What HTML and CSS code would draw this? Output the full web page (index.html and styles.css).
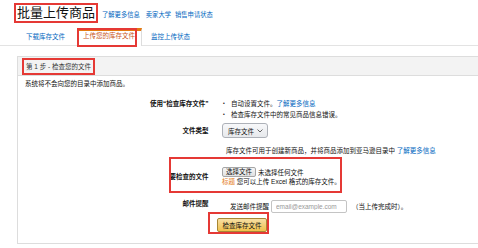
FILE: index.html
```html
<!DOCTYPE html>
<html lang="zh-CN">
<head>
  <meta charset="UTF-8" />
  <title>批量上传商品</title>
  <link rel="stylesheet" href="styles.css">
</head>
<body>
  <div class="top">
    <h1 class="mark">批量上传商品</h1>
    <nav class="top-links">
      <a href="#">了解更多信息</a>
      <a href="#">卖家大学</a>
      <a href="#">销售申请状态</a>
    </nav>
  </div>

  <ul class="tabs">
    <li class="tab">下载库存文件</li>
    <li class="tab active">上传您的库存文件</li>
    <li class="tab">监控上传状态</li>
  </ul>

  <section class="panel">
    <div class="panel-head">
      <span class="mark step">第 1 步 - 检查您的文件</span>
    </div>
    <div class="panel-body">
      <p class="intro">系统将不会向您的目录中添加商品。</p>

      <div class="row">
        <div class="label">使用“检查库存文件”</div>
        <ul class="value bullets">
          <li>自动设置文件。 <a href="#">了解更多信息</a></li>
          <li>检查库存文件中的常见商品信息错误。</li>
        </ul>
      </div>

      <div class="row row-type">
        <div class="label">文件类型</div>
        <div class="value">
          <span class="select">库存文件
            <svg width="6" height="4" viewBox="0 0 6 4"><polyline points="0.5,0.5 3,3 5.5,0.5" fill="none" stroke="#555" stroke-width="0.9"/></svg>
          </span>
        </div>
      </div>

      <div class="row row-note">
        <div class="label"></div>
        <div class="value note">库存文件可用于创建新商品，并将商品添加到亚马逊目录中 <a href="#">了解更多信息</a></div>
      </div>

      <div class="row row-file">
        <div class="label">要检查的文件</div>
        <div class="value">
          <div class="file-line"><span class="file-btn">选择文件</span>未选择任何文件</div>
          <div class="file-hint"><span class="hint">标题</span> 您可以上传 Excel 格式的库存文件。</div>
        </div>
      </div>

      <div class="row row-email">
        <div class="label">邮件提醒</div>
        <div class="value email">
          <span>发送邮件提醒</span>
          <input type="text" placeholder="email@example.com">
          <span class="after">（当上传完成时）。</span>
        </div>
      </div>

      <div class="actions">
        <span class="mark action-box"><button class="submit">检查库存文件</button></span>
      </div>
    </div>
  </section>
</body>
</html>
```

FILE: styles.css
```css
body {
  margin: 0;
  width: 478px;
  overflow: hidden;
  font-family: "Liberation Sans", "Noto Sans CJK SC", sans-serif;
  font-size: 6.5px;
  color: #111;
  background: #fff;
}

a {
  color: #0066c0;
  text-decoration: none;
}

.mark {
  border: 2px solid #e53935;
}

/* title */
.top {
  display: flex;
  align-items: flex-end;
  padding: 3px 0 0 14px;
}

.top h1 {
  margin: 0;
  padding: 0 1px;
  font-size: 13px;
  font-weight: normal;
  line-height: 16px;
  color: #111;
}

.top-links {
  display: flex;
  gap: 4px;
  margin: 0 0 4px 4px;
  font-size: 6.3px;
  line-height: 8px;
}

.top-links a:first-child {
  margin-right: 2px;
}

/* tabs */
.tabs {
  display: flex;
  gap: 6px;
  margin: 5px 0 0;
  padding: 0 0 0 20px;
  list-style: none;
  border-bottom: 1px solid #e3e3e3;
}

.tab {
  padding: 0 6px;
  line-height: 17px;
  color: #0066c0;
}

.tab.active {
  position: relative;
  padding: 0 6px 5px 5px;
  line-height: 10px;
  margin: 0 -3px -1px 0;
  border: 1px solid #ddd;
  border-top: 3px solid #e47911;
  border-bottom: none;
  background: #fff;
  color: #c9561b;
}

.tab.active::after {
  content: "";
  position: absolute;
  top: -3px;
  left: -1px;
  width: 60px;
  height: 19px;
  box-sizing: border-box;
  border: 2px solid #e53935;
}

/* panel */
.panel {
  width: 470px;
  margin: 10px 0 0 17px;
  border: 1px solid #ddd;
}

.panel-head {
  display: flex;
  align-items: center;
  height: 18px;
  padding-left: 4px;
  background: #f3f3f3;
  border-bottom: 1px solid #ddd;
}

.step {
  padding: 0 2px;
  line-height: 13px;
  color: #333;
}

.panel-body {
  padding: 3px 0 9px 7px;
}

.intro {
  margin: 0;
  line-height: 10px;
}

.row {
  display: flex;
  align-items: center;
}

.label {
  width: 183.5px;
  flex-shrink: 0;
  text-align: right;
  font-weight: bold;
  line-height: 10px;
}

.value {
  margin-left: 13.5px;
}

.row:first-of-type {
  margin-top: 8.5px;
  align-items: flex-start;
}

.row:first-of-type .label {
  line-height: 11px;
}

.bullets {
  margin-top: 0;
  margin-bottom: 0;
  padding: 0;
  list-style: none;
  line-height: 11px;
}

.bullets li {
  display: flex;
}

.bullets li::before {
  content: "•";
  width: 8px;
  padding-left: 1px;
  font-size: 5px;
}

.row-type {
  margin-top: 3.5px;
}

.select {
  display: inline-flex;
  align-items: center;
  gap: 3px;
  box-sizing: border-box;
  height: 15px;
  padding: 0 4px 0 5px;
  white-space: nowrap;
  border: 1px solid #adb1b8;
  border-radius: 3px;
  background: linear-gradient(#f7f8fa, #e7e9ec);
}

.row-note {
  margin-top: 7px;
}

.note {
  padding-left: 4px;
  line-height: 11px;
}

.row-file {
  position: relative;
  margin-top: 1px;
  padding: 9.5px 0 5.5px;
}

.row-file::after {
  content: "";
  position: absolute;
  top: 0;
  bottom: 0;
  left: 144px;
  width: 173px;
  box-sizing: border-box;
  border: 2px solid #e53935;
}

.file-line {
  display: flex;
  align-items: center;
  gap: 2px;
  height: 10.5px;
}

.file-btn {
  box-sizing: border-box;
  height: 10px;
  padding: 0 3px;
  line-height: 8px;
  border: 1px solid #a6a6a6;
  border-radius: 2px;
  background: linear-gradient(#f6f6f6, #e2e2e2);
}

.file-hint {
  line-height: 10.5px;
}

.hint {
  color: #e47911;
}

.row-email {
  margin-top: 6px;
}

.row-email .label {
  padding-bottom: 4px;
}

.email {
  display: flex;
  align-items: center;
  padding-left: 8px;
}

.email input {
  box-sizing: border-box;
  width: 76px;
  height: 13px;
  margin: 0 0 0 2px;
  padding: 0 4px;
  font: inherit;
  border: 1px solid #c4c4c4;
  border-radius: 2px;
}

.email input::placeholder {
  color: #999;
}

.email .after {
  margin-left: 5px;
}

.actions {
  margin-top: -1px;
  padding-left: 183px;
}

.action-box {
  display: inline-flex;
  padding: 4px 0 0 7px;
}

.submit {
  box-sizing: border-box;
  width: 50px;
  height: 14px;
  padding: 0;
  font: inherit;
  color: #111;
  border: 1px solid #a88734;
  border-radius: 2px;
  background: linear-gradient(#f7dfa5, #f0c14b);
}
```
